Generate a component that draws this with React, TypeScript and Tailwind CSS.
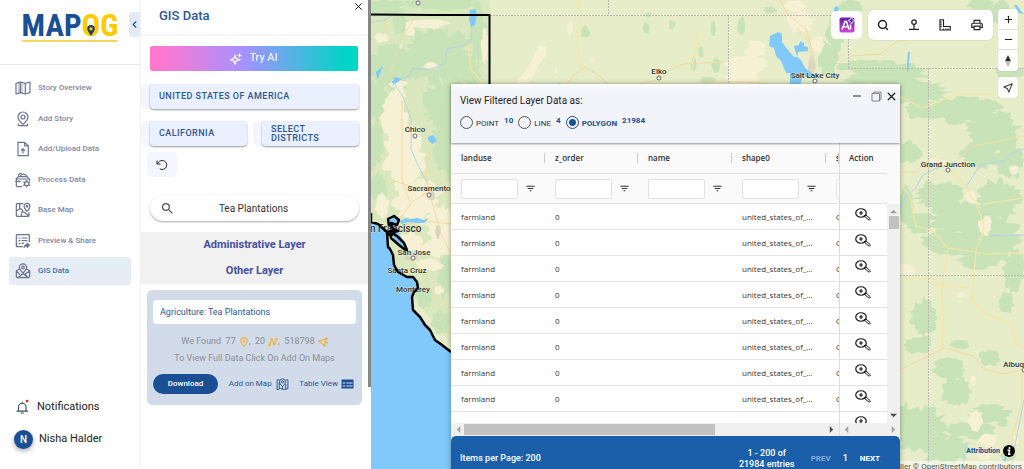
import type { ReactNode } from "react";
import { ChevronLeft, Minus, Plus, Search, X } from "lucide-react";
import {
  MdFilterList,
  MdOutlinePrint,
  MdSearch,
} from "react-icons/md";

type IconProps = { className?: string };

function Stroke({ className, children }: IconProps & { children: ReactNode }) {
  return (
    <svg
      viewBox="0 0 24 24"
      className={className}
      fill="none"
      stroke="currentColor"
      strokeWidth="1.8"
      strokeLinecap="round"
      strokeLinejoin="round"
      aria-hidden="true"
    >
      {children}
    </svg>
  );
}

const StoryIcon = (p: IconProps) => (
  <Stroke {...p}>
    <path d="M1.500 5 8 3l7.500 2 7-2v16l-7 2-7.500-2-6.500 2zM8 3v16M15.500 5v16" />
    <path d="M10.500 4v15.500M6 4v15.500" strokeWidth="1" />
  </Stroke>
);

const PinIcon = (p: IconProps) => (
  <Stroke {...p}>
    <path d="M12 20C7 15.500 4.500 12.500 4.500 9a7.500 7.500 0 0 1 15 0c0 3.500-2.500 6.500-7.500 11z" />
    <circle cx="12" cy="9" r="3" />
    <path d="M5 19.500v2.500h14v-2.500" />
  </Stroke>
);

const UploadIcon = (p: IconProps) => (
  <Stroke {...p}>
    <path d="M4.500 2h10l5.500 5.500V22H4.500zM14.500 2v5.500H20M12 18v-6M9.500 14l2.500-2.500 2.500 2.500" />
  </Stroke>
);

const ProcessIcon = (p: IconProps) => (
  <Stroke {...p}>
    <path d="M10 22H3.500A1.500 1.500 0 0 1 2 20.500V10l3-3h13l3 3M2 10.500h20v2M5 7c0-3 2-5 4-5M8 6.500C9 3 15 1 18 6.500M1 14h7" />
    <circle cx="17.500" cy="17.500" r="3.200" />
    <path d="M17.500 12.500v1.800M17.500 20.700v1.800M13 15l1.600.9M20.400 19.100l1.600.9M13 20l1.600-.9M20.400 15.900l1.600-.9" />
  </Stroke>
);

const BaseMapIcon = (p: IconProps) => (
  <Stroke {...p}>
    <path d="M12 2.500H3.500a1.500 1.500 0 0 0-1.500 1.500v16a1.500 1.500 0 0 0 1.500 1.500h16a1.500 1.500 0 0 0 1.500-1.500v-4M7 2.500v8l-5 3M7 10.500c3-1 5 2 4 4s-3 3-1 7M11 14.500l4 1.500 6 5M18 14c-3-3-4.500-5-4.500-7.500a4.500 4.500 0 0 1 9 0C22.500 9 21 11 18 14z" />
    <circle cx="18" cy="6.500" r="1.200" />
  </Stroke>
);

const PreviewIcon = (p: IconProps) => (
  <Stroke {...p}>
    <path d="M11 20.500H3a1 1 0 0 1-1-1V3.500a1 1 0 0 1 1-1h17.500a1 1 0 0 1 1 1V13M6 7.500h1.500M10.500 7.500H18M6 11.500h1.500M10.500 11.500H18M6 15.500h1.500M10.500 15.500H13" />
    <path d="M13.500 22c0-3.500 2-5 4.500-5v-2.500l4.500 4-4.500 4V20c-2 0-3.500.5-4.500 2z" fill="currentColor" strokeWidth="1" />
  </Stroke>
);

const GisIcon = (p: IconProps) => (
  <Stroke {...p}>
    <path d="M12 15C8.500 11.500 6.500 9.500 6.500 6.800a5.500 5.500 0 0 1 11 0C17.500 9.500 15.500 11.500 12 15z" />
    <circle cx="12" cy="6.800" r="2" />
    <path d="M6.500 9 2 11.500v9L4 22l8-6 8 6 2-1.500v-9L17.500 9M2 12l5 5M22 12l-7 5 5 5M4 22h16" />
  </Stroke>
);

const RowZoomIcon = () => (
  <svg viewBox="0 0 32 26" className="h-[13px] w-4" fill="none" stroke="#1c1c1c" strokeWidth="2.400" aria-hidden="true">
    <ellipse cx="12" cy="10" rx="10.500" ry="8.500" />
    <path d="M12 6v8M8 10h8" strokeWidth="2.400" />
    <path d="m19 17 3-3 9 8-2.500 2.500z" strokeWidth="2" />
    <path d="M18 14.500l3 2" strokeWidth="3" />
  </svg>
);

const NAV = [
  { label: "Story Overview", Icon: StoryIcon },
  { label: "Add Story", Icon: PinIcon },
  { label: "Add/Upload Data", Icon: UploadIcon },
  { label: "Process Data", Icon: ProcessIcon },
  { label: "Base Map", Icon: BaseMapIcon },
  { label: "Preview & Share", Icon: PreviewIcon },
  { label: "GIS Data", Icon: GisIcon, active: true },
];

const GEOMETRIES = [
  { id: "point", label: "POINT", count: 10 },
  { id: "line", label: "LINE", count: 4 },
  { id: "polygon", label: "POLYGON", count: 21984 },
];

const COLUMNS = ["landuse", "z_order", "name", "shape0", "s"];

const ROWS = Array.from({ length: 9 }, (_, i) => ({
  id: i,
  cells: ["farmland", "0", "", "united_states_of_america", "C"],
}));

function Logo() {
  return (
    <a href="#home" aria-label="MAPOG" className="relative flex flex-col items-center leading-none no-underline">
      <span className="font-['Roboto_Condensed','Liberation_Sans_Narrow',sans-serif] text-[31px] leading-7 font-bold text-[#1a4f94]">
        MAP<span className="text-[#fecb00]">OG</span>
      </span>
      <span className="h-[2px] w-24 rounded-full bg-[#f7d65c]" />
      <svg viewBox="0 0 14 20" className="absolute top-[13px] left-[65px] h-[11px] w-2" aria-hidden="true">
        <path d="M7 0a7 7 0 0 0-7 7c0 4 4 7 7 13 3-6 7-9 7-13a7 7 0 0 0-7-7z" fill="#1d4066" />
        <circle cx="7" cy="7" r="3" fill="#fecb00" />
      </svg>
    </a>
  );
}

function Sidebar() {
  return (
    <aside className="relative flex w-[140px] shrink-0 flex-col bg-white">
      <div className="flex h-[65px] items-start justify-center border-b border-[#e6e8ec] pt-[12px]">
        <Logo />
      </div>
      <button
        type="button"
        aria-label="Collapse menu"
        className="absolute top-3 right-0 flex h-[25px] w-[11px] items-center justify-center rounded-l-[3px] bg-[#e3eaf3] text-[#1a4f94]"
      >
        <ChevronLeft className="size-[11px] shrink-0" strokeWidth={2.5} />
      </button>
      <nav className="mx-[9px] mt-[9px] flex h-[211px] flex-col justify-between">
        {NAV.map(({ label, Icon, active }) => (
          <a
            key={label}
            href={`#${label}`}
            className={`flex h-7 items-center gap-[7px] rounded-[3px] pl-[6px] text-[8px] font-medium ${
              active ? "bg-[#e6edf5] text-[#3f6fae]" : "text-[#8087a0]"
            }`}
          >
            <Icon className="size-4 shrink-0 text-[#6b7391]" />
            {label}
          </a>
        ))}
      </nav>
      <div className="mt-auto mb-5 flex flex-col gap-[14px] pl-[14px] text-[11px] text-[#222]">
        <button type="button" className="flex h-[18px] items-center gap-[5px]">
          <svg viewBox="0 0 24 24" className="size-[18px]" fill="none" stroke="#3c4858" strokeWidth="1.500" aria-hidden="true">
            <path d="M6 17.500V12a5 5 0 0 1 10 0v5.500M4 17.500h14M9.500 20h3M11 5.500V7" strokeLinecap="round" />
            <circle cx="17.500" cy="4" r="1.800" fill="#e11d1d" stroke="none" />
          </svg>
          Notifications
        </button>
        <button type="button" className="flex h-[19px] items-center gap-[6px]">
          <span className="flex size-[19px] items-center justify-center rounded-full bg-[#1a4f94] text-[10px] font-medium text-white shadow-[0_2px_5px_rgba(0,0,0,0.35)]">
            N
          </span>
          Nisha Halder
        </button>
      </div>
    </aside>
  );
}

function RegionButton({ children }: { children: ReactNode }) {
  return (
    <div className="flex flex-1 rounded-[5px] bg-[#f3f6ff] pl-[9px]">
      <button
        type="button"
        className="flex h-[25px] flex-1 items-center rounded-[4px] bg-[#ebf0ff] px-[9px] text-left text-[9px] leading-[9px] font-medium tracking-wider text-[#2c5696] shadow-[0_1px_2px_rgba(0,0,0,0.4)]"
      >
        {children}
      </button>
    </div>
  );
}

function GisPanel() {
  return (
    <section className="relative flex w-[231px] shrink-0 flex-col border-l border-[#f1f1f4] bg-white">
      <header className="flex h-9 items-start justify-between border-b-2 border-[#f5f5f7] pl-[18px]">
        <h1 className="mt-2 text-[13px] leading-4 font-medium text-[#2c5696]">GIS Data</h1>
        <button type="button" aria-label="Close panel" className="mt-px mr-[7px] text-black">
          <X className="size-[11px]" strokeWidth={2} />
        </button>
      </header>

      <div className="mr-[13px] ml-[9px]">
        <button
          type="button"
          className="mt-[10px] flex h-[25px] w-full items-center justify-center gap-[7px] rounded-[2px] bg-[linear-gradient(90deg,#ff78cf_5%,#a592ff_45%,#00d5c6_94%)] text-[11px] text-white"
        >
          <svg viewBox="0 0 24 24" className="size-3" fill="none" stroke="white" strokeWidth="2.600" aria-hidden="true">
            <path d="M9 6.500 11.300 12.700 17.500 15l-6.200 2.300L9 23.500l-2.300-6.200L.500 15l6.200-2.300z" transform="translate(1 -1.500)" />
            <path d="m19 0 1.400 3.600L24 5l-3.600 1.400L19 10l-1.400-3.600L14 5l3.600-1.400z" fill="white" stroke="none" />
          </svg>
          Try AI
        </button>
      </div>

      <div className="mt-[13px] mr-3 flex">
        <RegionButton>UNITED STATES OF AMERICA</RegionButton>
      </div>
      <div className="mt-[12px] mr-3 flex gap-[6px]">
        <RegionButton>CALIFORNIA</RegionButton>
        <RegionButton>SELECT DISTRICTS</RegionButton>
      </div>
      <button
        type="button"
        aria-label="Reset region"
        className="mt-[6px] ml-[6px] flex h-[25px] w-[30px] items-center justify-center rounded-[5px] bg-[#f3f6ff] text-[#222]"
      >
        <svg viewBox="0 0 24 24" className="size-3" fill="none" stroke="currentColor" strokeWidth="2" aria-hidden="true">
          <path d="M2 3v7h7M3 9.500C5 5 8.500 3 12.500 3a9 9 0 1 1-5 16.500" />
        </svg>
      </button>

      <label className="mt-[18px] mr-3 ml-[9px] flex h-[26px] items-center rounded-full bg-white px-[10px] shadow-[0_1px_2px_rgba(0,0,0,0.35)]">
        <MdSearch className="size-[15px] shrink-0 text-[#555]" aria-hidden="true" />
        <input
          type="text"
          aria-label="Search layers"
          defaultValue="Tea Plantations"
          className="min-w-0 flex-1 pr-[17px] text-center text-[10px] text-[#333] outline-none"
        />
      </label>

      <div className="mt-[11px] mr-[3px] flex flex-col gap-[2px] bg-[#f1f1f1] py-[1px] text-center text-[11px] leading-6 font-bold text-[#4450a3]">
        <button type="button">Administrative Layer</button>
        <button type="button">Other Layer</button>
      </div>

      <article className="mt-[6px] mr-[9px] ml-[6px] flex flex-col rounded-[5px] bg-[#d1dbe9] px-[6px] pt-[10px] pb-[11px]">
        <input
          type="text"
          aria-label="Selected layer"
          defaultValue="Agriculture: Tea Plantations"
          className="h-6 w-full rounded-[4px] bg-white px-[7px] text-[9px] text-[#2c5696] outline-none"
        />
        <div className="mt-[9px] flex flex-col items-center text-[9px] leading-[17px] text-[#8b8f95]">
          <p className="flex items-center gap-[3px]">
            We Found&nbsp; 77
            <svg viewBox="0 0 24 24" className="size-[10px]" fill="none" stroke="#efb53d" strokeWidth="2.500" aria-label="points">
              <path d="M12 22C7 17 4 14 4 9.500a8 8 0 0 1 16 0C20 14 17 17 12 22zM12 6v7M8.500 9.500h7" />
            </svg>
            <span className="-ml-[3px]">,&nbsp; 20</span>
            <svg viewBox="0 0 24 24" className="size-[10px]" fill="#efb53d" stroke="#efb53d" strokeWidth="3" aria-label="lines">
              <path d="M3 19 9 6l6 11 6-12" fill="none" />
              <circle cx="3" cy="19" r="2" />
              <circle cx="9" cy="6" r="2" />
              <circle cx="15" cy="17" r="2" />
              <circle cx="21" cy="5" r="2" />
            </svg>
            <span className="-ml-[3px]">,&nbsp; 518798</span>
            <svg viewBox="0 0 24 24" className="size-[10px]" fill="#efb53d" stroke="#efb53d" strokeWidth="2.500" aria-label="polygons">
              <path d="M3 10 19 4l-3 8 3 1-3 8z" fill="none" />
              <circle cx="3" cy="10" r="1.500" />
              <circle cx="20" cy="4" r="2" />
              <circle cx="21" cy="13" r="1.500" />
              <circle cx="16" cy="21" r="1.500" />
            </svg>
          </p>
          <p>To View Full Data Click On Add On Maps</p>
        </div>
        <div className="mt-[7px] flex items-center justify-between pr-[2px] text-[8px] text-[#2c5696]">
          <button type="button" className="h-5 w-[65px] rounded-full bg-[#1a4f94] font-medium text-white">
            Download
          </button>
          <button type="button" className="flex items-center gap-1">
            Add on Map
            <Stroke className="size-[13px]">
              <path d="M6 3.500H2v18l6-2 8 2 6-2v-16h-4M6 8v11M18 12v8M12 16C8 12 6.500 10 6.500 7a5.500 5.500 0 0 1 11 0c0 3-1.500 5-5.500 9z" />
              <circle cx="12" cy="7" r="2" />
              <path d="M12 16v4" />
            </Stroke>
          </button>
          <button type="button" className="flex items-center gap-[3px]">
            Table View
            <svg viewBox="0 0 26 20" className="h-[10px] w-[13px]" aria-hidden="true">
              <path d="M1 1h24v18H1z" fill="#1a4f94" />
              <path d="M3 8h6M11 8h12M3 14h6M11 14h12" stroke="#d1dbe9" strokeWidth="2.400" />
            </svg>
          </button>
        </div>
      </article>

      {/* Scroll thumb along the right edge */}
      <div className="absolute top-0 right-0 h-[387px] w-[3px] bg-[#868686]" />
    </section>
  );
}

// Ragged closed outline around an ellipse, stable for a given seed
function ragged(cx: number, cy: number, rx: number, ry: number, seed: number) {
  const steps = Math.max(14, Math.round((rx + ry) * 0.9));
  let s = seed * 9301 + 49297;
  const pts: string[] = [];
  for (let i = 0; i < steps; i++) {
    s = (s * 9301 + 49297) % 233280;
    const k = 0.68 + (s / 233280) * 0.42;
    const a = (i / steps) * Math.PI * 2;
    pts.push(`${(cx + Math.cos(a) * rx * k).toFixed(1)} ${(cy + Math.sin(a) * ry * k).toFixed(1)}`);
  }
  return `M${pts.join("L")}Z`;
}

const FOREST: [number, number, number, number][] = [
  [436, 55, 38, 30], [382, 8, 26, 9], [392, 68, 26, 24], [478, 30, 8, 34], [400, 24, 8, 12], [440, 4, 40, 7],
  [470, 72, 12, 14], [376, 100, 12, 22], [446, 104, 26, 26], [452, 140, 20, 40], [374, 145, 10, 26],
  [378, 188, 10, 16], [446, 275, 10, 24], [425, 298, 9, 11], [440, 322, 10, 14],
  [585, 32, 5, 6], [646, 28, 4, 6], [672, 25, 4, 5], [694, 64, 3, 8], [648, 15, 4, 3],
  [741, 26, 4, 10], [713, 28, 3, 9], [770, 10, 8, 4], [716, 65, 5, 9], [708, 80, 10, 4], [701, 52, 3, 7],
  [835, 32, 9, 22], [828, 58, 11, 18], [850, 9, 14, 10], [862, 66, 26, 7], [888, 74, 40, 14], [856, 80, 12, 6],
  [915, 92, 34, 14], [1010, 72, 18, 6], [1000, 12, 10, 12], [980, 4, 14, 6],
  [962, 110, 40, 14], [992, 132, 30, 22], [918, 110, 14, 10], [908, 152, 14, 12], [980, 155, 20, 14],
  [940, 196, 26, 16], [962, 218, 34, 18], [918, 222, 16, 12], [948, 242, 28, 14], [998, 200, 24, 22],
  [990, 240, 34, 24], [1010, 160, 16, 20], [1014, 270, 12, 22], [978, 262, 20, 8], [1006, 302, 9, 12], [906, 206, 8, 20],
  [924, 318, 14, 20], [918, 345, 14, 10], [960, 344, 10, 5], [990, 358, 12, 9], [950, 368, 18, 12],
  [956, 392, 16, 16], [922, 430, 28, 24], [946, 450, 26, 14], [988, 414, 24, 10], [980, 432, 18, 10],
  [1003, 422, 6, 6], [960, 430, 14, 8], [1008, 455, 8, 8], [904, 420, 8, 18],
];

const CREAM: [number, number, number, number][] = [
  [431, 66, 8, 4], [428, 24, 22, 5], [381, 38, 8, 5], [401, 47, 2, 2], [410, 30, 6, 8], [485, 46, 4, 18], [398, 84, 10, 5],
  [394, 118, 14, 26], [404, 158, 22, 38], [416, 200, 26, 24], [442, 225, 16, 22], [436, 248, 20, 10], [410, 242, 12, 10], [428, 265, 16, 7],
  [439, 290, 6, 5], [399, 95, 8, 10], [382, 205, 8, 14],
  [556, 71, 2, 3], [592, 60, 2, 4], [570, 28, 3, 8],
  [746, 66, 22, 14], [756, 50, 12, 9], [742, 78, 18, 6], [800, 22, 16, 12], [795, 6, 12, 7], [818, 44, 7, 10],
  [906, 270, 9, 7], [971, 197, 6, 7], [985, 226, 7, 11], [1014, 170, 6, 5], [933, 162, 14, 4], [960, 295, 4, 3],
  [973, 380, 3, 6], [976, 420, 8, 12], [988, 440, 10, 8], [985, 455, 8, 5], [1015, 440, 4, 5],
];

const ROADS = [
  "M385 18c-4 14 8 22 10 34s-6 16 -4 28",
  "M395 45c8-8 14-16 20-30",
  "M402 100v80l8 22M392 180l30 10 6-8M430 150l-4 22 4 24 12 40 10 20M392 235l25-15 35 4M390 232l22-30 17-10M395 240l18 20 10 15 8 15 20 20M422 195l28-18",
  "M567 84l7-9 11-8 13 8 10 9M640 84l20-5 10-9 14-6 40-2",
  "M700 82h50l20 2M780 0l8 15 18 14 6 20v25M840 62l12-6 28-2 16-12 50-10M812 52l-6-14-10-10",
  "M900 172h16l12-12M948 168l14-12 10-10 24-4 28-6M900 370l30-15 15-7 28 8 12 14 20 4 19-5",
  "M1022 372v30l-10 36v31",
];

const YELLOW_ROADS = [
  "M578 0l2 20-3 25 4 22M468 45l3 24 12 15M698 30l-2 20-4 16",
  "M900 96l22 12 36-14 66 0M948 168l14 14 14 22 8 20-2 12-6 14-2 24v14l-3 18M900 184l10 12 6 30 16 4 16 18 26 4 12 2 38-1M948 250l-4 22-2 20 1 28-1 28M900 278h30l5 6 35 4M970 296l12 16 30 12 3 18 9 6M984 204l26-4 14-2",
];

const BORDERS =
  "M490 15.500H848M608.500 0v15M728.500 15v69M848.500 15v53M848 68.500h176M928.500 68v401M900 275.500h124";

const CITIES = [
  { name: "Elko", x: 659, y: 74, dot: [659, 78] },
  { name: "Salt Lake City", x: 815, y: 78, dot: [815, 81] },
  { name: "Chico", x: 415, y: 132, dot: [415, 136] },
  { name: "Sacramento", x: 429, y: 191, dot: [429, 195] },
  { name: "San Jose", x: 414, y: 255, dot: [413, 258] },
  { name: "Santa Cruz", x: 407, y: 273, dot: null },
  { name: "Monterey", x: 413, y: 292, dot: null },
  { name: "Grand Junction", x: 948, y: 167, dot: [948, 170] },
  { name: "Albuquerque", x: 1026, y: 367, dot: [1024, 370] },
  { name: "San Francisco", x: 390, y: 232, dot: null },
];

function MapCanvas() {
  return (
    <svg
      viewBox="371 0 653 469"
      preserveAspectRatio="xMinYMin slice"
      className="absolute inset-0 size-full"
      role="img"
      aria-label="Map"
    >
      <rect x="371" width="900" height="900" fill="#e7edc8" />
      <rect x="371" width="119" height="84" fill="#d9e8bf" />
      <path d="M371 84h80v260l-80-100z" fill="#dbe8bd" />
      <g fill="#c8e3b8">
        {FOREST.map(([x, y, rx, ry], i) => (
          <path key={i} d={ragged(x, y, rx, ry, i + 3)} />
        ))}
      </g>
      <g fill="#f6f0d4">
        {CREAM.map(([x, y, rx, ry], i) => (
          <path key={i} d={ragged(x, y, rx, ry, i + 11)} />
        ))}
        <path d="M539 45l8 2-1 9-6 7-6 12-6 9h-13l8-10 8-12z" />
      </g>
      <g fill="#d8d4c4">
        <path d={ragged(431, 196, 5, 5, 4)} />
        <path d={ragged(438, 232, 3, 8, 6)} />
        <path d={ragged(812, 66, 4, 12, 7)} />
        <path d={ragged(411, 256, 7, 5, 8)} />
      </g>
      <g fill="none" stroke="#f6d9a0" strokeWidth="1">
        {ROADS.map((d) => (
          <path key={d} d={d} />
        ))}
      </g>
      <g fill="none" stroke="#fae5a2" strokeWidth="1.200">
        {YELLOW_ROADS.map((d) => (
          <path key={d} d={d} />
        ))}
      </g>
      <g fill="none" stroke="#b3d5e4" strokeWidth="1">
        <path d="M371 23l14-3 14-8M472 31l-1 10-10 5-14 3-2 15-18 6-14-2-4 8-10 4M395 85l8 12 8 22 0 30 6 14 10 20M900 208l6-12 10-8 6-12 14-8 14-3M1024 400l-8 40-6 29M966 187l14-22 24-4 8-8 12-4M990 236l34-1M963 469l3-25" />
      </g>

      {/* Water */}
      <g fill="#80c9fa">
        <path d="M371 222l6 2 10 8 1 15 5 8 1 10 4 7 9 5h6l4 5 1 6-6 9 1 13 7 7 10 13 5 10 7 5 9 7v117h-80z" />
        <path d="M388 222l6-6 6 4-3 5 0 5 6 10 5 10-7-4-7-7-4-9z" />
        <path d="M400 221l6-3 4 1 8-1 6 2 5-2-5 5-8 0-7-1-8 2z" />
        <path d="M470 10l5-1 2 5-2 11-4 2-2-8z" />
        <path d="M770 36l8-4 4 2 0 8 5 7 7 8 3 0-2-7-1-4 5-1 1-4 4 2 0 3 4 1 0 4-10 1-1 5 4 3 4 8 8 6-2 4-8-2-2 7-3 2h-8v-12l-4 0-5-12-5-5-2-8-5-2z" />
        <path d="M834 8l3-2 2 3-2 3h-3zM1014 5l3 0 3 5 4 4-5-1zM908 52l2 0-1 10 0 6-2 4 0-8z" />
        <path d="M376 72l7-6-3 8-3 5zM394 77l8 2-4 3-5 3zM428 137l5-2 4 6-5 3-4-4zM392 81l4-1 0 3-4 0z" />
        <path d="M558 84l1-1 2 1zM1003 460l3-4v6z" />
      </g>

      <path d={BORDERS} fill="none" stroke="#bdb9b4" strokeWidth="1" strokeDasharray="2 1" />

      <g className="font-['Roboto',sans-serif]">
        <circle cx="418" cy="3" r="2" fill="#fff" stroke="#666" />
        {CITIES.map(({ name, x, y, dot }) => (
          <g key={name}>
            {dot && <circle cx={dot[0]} cy={dot[1]} r="2" fill="#fff" stroke="#666" />}
            <text
              x={x}
              y={y}
              textAnchor="middle"
              className={name === "San Francisco" ? "text-[10px]" : "text-[8px]"}
              fill="#333"
              fontWeight="500"
              stroke="#f5f3df"
              strokeOpacity="0.6"
              strokeWidth="1"
              paintOrder="stroke"
            >
              {name}
            </text>
          </g>
        ))}
      </g>

      {/* State outline, drawn over the coastal labels */}
      <g fill="none" stroke="#000" strokeWidth="2" strokeLinejoin="round">
        <path d="M371 14.500l60 .5h58.500V84" />
        <path d="M371 213v9l7 2 9 8 1 15 2 2 3 6 1 10 4 7 9 5h6l4 5 1 6-4 4-2 5 1 13 7 7 5 8 5 5 5 10 7 5 9 7" strokeWidth="2.500" />
        <path d="M389 226l-1-7 6-3 5 4-2 5-6-2 1 5 6 3-8 2 1 5 8 7 5 4 3 1-3-7-6-6-8-6-3 2 4 3 4-6-7 2" strokeWidth="2.500" />
      </g>
    </svg>
  );
}

function MapControls() {
  return (
    <div className="absolute top-[9px] right-[6px] flex items-start gap-[5px] text-[#222]">
      <button type="button" aria-label="AI assistant" className="mt-[2px] mr-px flex h-7 w-[31px] items-center justify-center rounded-[5px] bg-white">
        <svg viewBox="0 0 32 32" className="size-4" aria-hidden="true">
          <defs>
            <linearGradient id="ai" x1="0" y1="0" x2="0" y2="1">
              <stop offset="0" stopColor="#6021a8" />
              <stop offset="1" stopColor="#d545d6" />
            </linearGradient>
          </defs>
          <rect x="1" y="1" width="30" height="30" rx="4" fill="url(#ai)" />
          <path d="M6 25 12 9h3l5 16M8.500 19.500h9M23 15v10" fill="none" stroke="#fff" strokeWidth="3" />
          <path d="m25 0 2.200 4.800L32 7l-4.800 2.200L25 14l-2.200-4.800L18 7l4.800-2.200z" fill="#6021a8" stroke="#fff" strokeWidth="1.500" />
        </svg>
      </button>
      <div className="mt-px flex h-[30px] w-[125px] items-center justify-around rounded-[6px] bg-white shadow-[0_0_2px_rgba(0,0,0,0.15)]">
        <button type="button" aria-label="Search">
          <Search className="size-3" strokeWidth={2.8} />
        </button>
        <button type="button" aria-label="Drop pin">
          <svg viewBox="0 0 24 24" className="size-3" fill="none" stroke="currentColor" strokeWidth="2.500" aria-hidden="true">
            <circle cx="12" cy="6" r="4.500" />
            <path d="M12 10.500V20M2 20.500h20" />
          </svg>
        </button>
        <button type="button" aria-label="Measure">
          <svg viewBox="0 0 24 24" className="size-3" fill="none" stroke="currentColor" strokeWidth="2.300" aria-hidden="true">
            <path d="M2 1.500h7v13.500h13.500V22H2zM2 6h3.500M2 10.500h3.500M2 15h3.500M9 22v-3M13.500 22v-3M18 22v-3" />
          </svg>
        </button>
        <button type="button" aria-label="Print">
          <MdOutlinePrint className="size-[14px]" />
        </button>
      </div>
      <div className="flex flex-col gap-[6px]">
        <div className="flex w-5 flex-col divide-y divide-[#ddd] rounded-[3px] bg-white shadow-[0_0_1px_rgba(0,0,0,0.3)]">
          <button type="button" aria-label="Zoom in" className="flex h-[21px] items-center justify-center">
            <Plus className="size-[11px]" strokeWidth={2.5} />
          </button>
          <button type="button" aria-label="Zoom out" className="flex h-5 items-center justify-center">
            <Minus className="size-[11px]" strokeWidth={2.5} />
          </button>
          <button type="button" aria-label="Reset north" className="flex h-[21px] items-center justify-center">
            <svg viewBox="0 0 12 24" className="h-3 w-[6px]" aria-hidden="true">
              <path d="M6 0 0 12h12z" fill="#333" />
              <path d="M6 24 0 12h12z" fill="#bbb" />
            </svg>
          </button>
        </div>
        <button type="button" aria-label="Locate me" className="flex h-[21px] w-5 items-center justify-center rounded-[3px] bg-white shadow-[0_0_1px_rgba(0,0,0,0.3)]">
          <svg viewBox="0 0 24 24" className="size-[10px]" fill="none" stroke="#333" strokeWidth="2.500" strokeLinejoin="round" aria-hidden="true">
            <path d="M22 2 2 9.500l8.500 3.500L14 22z" />
          </svg>
        </button>
      </div>
    </div>
  );
}

function Arrow({ d, dark }: { d: string; dark?: boolean }) {
  return (
    <svg viewBox="0 0 8 8" className="size-[7px] shrink-0" fill={dark ? "#505050" : "#a3a3a3"} aria-hidden="true">
      <path d={d} />
    </svg>
  );
}

const LEFT = "M6 0v8L2 4z";
const RIGHT = "M2 0v8l4-4z";
const UP = "M0 6h8L4 2z";
const DOWN = "M0 2h8L4 6z";

const action = "border-l border-[#dcdcdc] border-b border-b-[#e2e2e2] p-0";

function LayerTable() {
  return (
    <div className="flex h-[280px] font-['Open_Sans','Noto_Sans',sans-serif] text-[8px] text-[#333]">
      <div className="min-w-0 flex-1 overflow-hidden">
        <table className="w-full table-fixed border-separate border-spacing-0 text-left">
          <colgroup>
            <col className="w-[94px]" />
            <col className="w-[93px]" />
            <col className="w-[94px]" />
            <col className="w-[94px]" />
            <col />
            <col className="w-12" />
          </colgroup>
          <thead className="bg-[#fafafa]">
            <tr className="h-[31px]">
              {COLUMNS.map((c) => (
                <th key={c} className="overflow-hidden border-b border-[#e2e2e2] p-0 pl-[10px] font-semibold">
                  <span className="block h-[10px] overflow-hidden border-r border-[#ccc] leading-[10px]">{c}</span>
                </th>
              ))}
              <th className={`${action} bg-[#fafafa] pl-[9px] font-semibold`}>Action</th>
            </tr>
            <tr className="h-[30px]">
              {COLUMNS.map((c) => (
                <td key={c} className="overflow-hidden border-b border-[#e2e2e2] p-0 pl-[10px]">
                  <div className="flex items-center gap-[7px]">
                    <input
                      type="text"
                      aria-label={`Filter ${c}`}
                      className="h-5 w-[57px] shrink-0 rounded-[2px] border border-[#e2e2e2] bg-white px-1 outline-none"
                    />
                    <button type="button" aria-label={`${c} filter options`}>
                      <MdFilterList className="size-[11px]" />
                    </button>
                  </div>
                </td>
              ))}
              <td className={`${action} bg-[#fafafa]`} />
            </tr>
          </thead>
          <tbody>
            {ROWS.map((row) => (
              <tr key={row.id} className="h-[26px]">
                {row.cells.map((cell, i) => (
                  <td
                    key={i}
                    className={`overflow-hidden border-b border-[#e6e6e6] p-0 pl-[10px] whitespace-nowrap ${
                      i === 4 ? "text-clip" : "pr-[10px] text-ellipsis"
                    }`}
                  >
                    {cell}
                  </td>
                ))}
                <td className={`${action} bg-white`}>
                  <button type="button" aria-label="Zoom to feature" className="mb-[4px] ml-[15px] block">
                    <RowZoomIcon />
                  </button>
                </td>
              </tr>
            ))}
          </tbody>
        </table>
      </div>
      <div className="flex w-[13px] shrink-0 flex-col bg-[#fafafa] pt-[61px]">
        <div className="flex flex-1 flex-col items-center bg-[#f0f0f0] py-1">
          <Arrow d={UP} />
          <div className="mt-px h-[13px] w-[10px] bg-[#c1c1c1]" />
          <div className="mt-auto">
            <Arrow d={DOWN} dark />
          </div>
        </div>
      </div>
    </div>
  );
}

function DataWindow() {
  return (
    <section className="absolute top-[84px] left-20 flex w-[449px] flex-col bg-white shadow-[0_0_5px_rgba(0,0,0,0.35)]">
      <header className="relative z-10 flex h-[59px] justify-between bg-[linear-gradient(#ffffff,#f3f4f9_6px)] pt-[10px] pr-[2px] pl-[9px] shadow-[0_1px_2px_rgba(0,0,0,0.4)]">
        <fieldset>
          <legend className="text-[10px] leading-[14px] text-[#222]">View Filtered Layer Data as:</legend>
          <div className="mt-[7px] flex items-center gap-[5px]">
            {GEOMETRIES.map(({ id, label, count }) => (
              <label
                key={id}
                className="flex items-center gap-[3px] text-[8px] text-[#333] has-checked:font-bold has-checked:text-[#1a4f94]"
              >
                <input
                  type="radio"
                  name="geometry"
                  value={id}
                  defaultChecked={id === "polygon"}
                  className="size-[13px] appearance-none rounded-full border border-[#555] checked:border-[#1a4f94] checked:bg-[radial-gradient(circle,#1a4f94_3px,transparent_4px)]"
                />
                <span className="mt-[3px]">{label}</span>
                <span className="-mt-[3px] ml-[2px] font-bold text-[#1a4f94]">{count}</span>
              </label>
            ))}
          </div>
        </fieldset>
        <div className="flex h-[4px] items-center text-[#222]">
          <button type="button" aria-label="Minimize" className="mr-[8px]">
            <Minus className="size-3" strokeWidth={2} />
          </button>
          <button type="button" aria-label="Maximize" className="mr-[3px]">
            <svg viewBox="0 0 22 22" className="size-[11px]" fill="none" stroke="#777" strokeWidth="1.800" aria-hidden="true">
              <path d="M2 5h15v15H2zM5 5l1-3h14v14l-3 2" />
            </svg>
          </button>
          <button type="button" aria-label="Close">
            <X className="size-[13px]" strokeWidth={2.5} />
          </button>
        </div>
      </header>
      <LayerTable />
      <div className="flex h-[13px] bg-[#f0f0f0]">
        <div className="flex flex-1 items-center px-1">
          <Arrow d={LEFT} />
          <div className="ml-[2px] h-[11px] w-[251px] bg-[#c1c1c1]" />
          <div className="ml-auto">
            <Arrow d={RIGHT} dark />
          </div>
        </div>
        <div className="flex w-[61px] items-center justify-between border-l border-[#dcdcdc] px-[3px]">
          <Arrow d={LEFT} />
          <Arrow d={RIGHT} />
        </div>
      </div>
      <footer className="flex h-[46px] items-center rounded-t-[5px] bg-[#1b5faa] pr-5 pl-[9px] text-[9px] font-medium text-white">
        <span className="flex-1">Items per Page: 200</span>
        <span className="w-16 text-center leading-[11px]">1 - 200 of 21984 entries</span>
        <div className="ml-3 flex items-center gap-3 text-[8px]">
          <button type="button" disabled className="font-bold text-[#86abd6]">
            PREV
          </button>
          <span className="text-[9px]">1</span>
          <button type="button" className="font-bold">
            NEXT
          </button>
        </div>
      </footer>
    </section>
  );
}

export default function App() {
  return (
    <div className="flex h-screen min-h-[460px] overflow-hidden bg-white font-['Roboto',sans-serif]">
      <Sidebar />
      <GisPanel />
      <main className="relative flex-1 overflow-hidden">
        <MapCanvas />
        <MapControls />
        <div className="absolute right-0 bottom-0 flex flex-col items-end">
          <a href="#attribution" className="mr-[9px] mb-[4px] flex items-center gap-[3px] text-[7px] font-bold text-[#1a4f94]">
            Attribution
            <svg viewBox="0 0 24 24" className="size-3" aria-hidden="true">
              <circle cx="12" cy="12" r="12" />
              <circle cx="13" cy="6" r="2.200" fill="#fff" />
              <path d="M9 10.500h4l-1.500 8h3.500" fill="none" stroke="#fff" strokeWidth="2.800" />
            </svg>
          </a>
          <p className="h-2 bg-white/50 px-[2px] text-[8px] leading-[12px] text-[#555]">
            <a href="#maptiler">© MapTiler</a> <a href="#osm">© OpenStreetMap contributors</a>
          </p>
        </div>
        <DataWindow />
      </main>
    </div>
  );
}
